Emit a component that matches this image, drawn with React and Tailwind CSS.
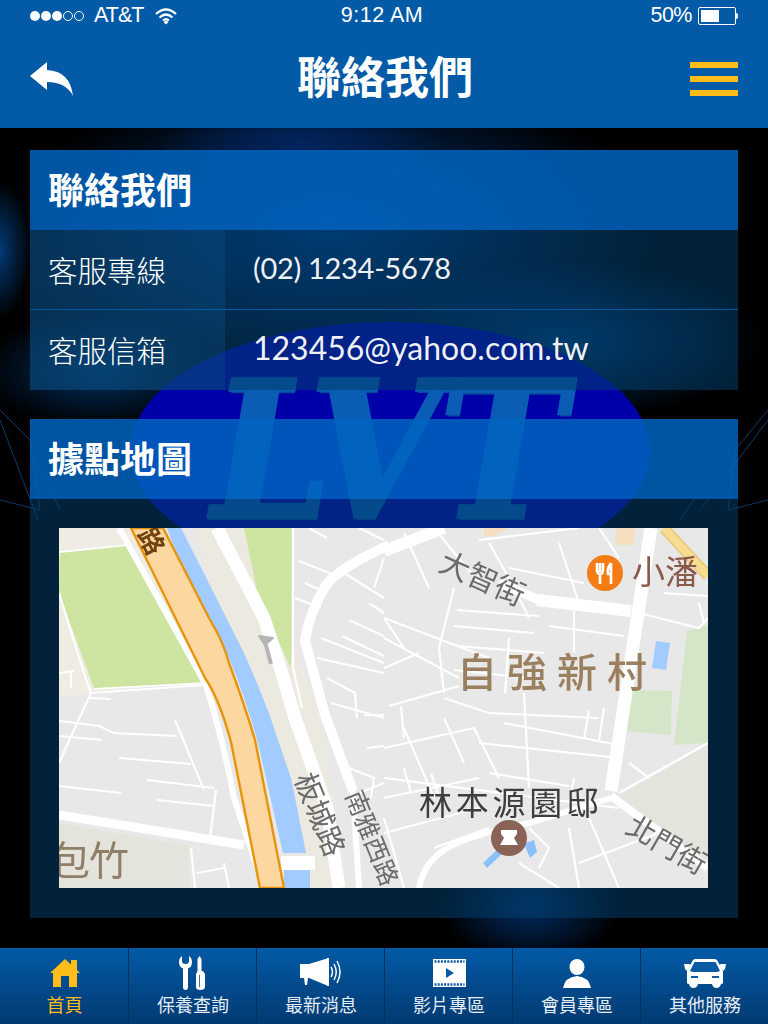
const thinRoads = [
  // left block
  'M0 65 L25 145 L32 165 L0 235', 'M32 165 L145 157', 'M30 170 L52 171', 'M0 193 L40 198 L55 205 L118 208',
  'M0 208 L43 212', 'M116 192 L145 262', 'M60 230 L132 236', 'M88 252 L155 260', 'M0 258 L62 265', 'M98 272 L155 278',
  'M157 262 L151 310', 'M132 320 L136 360', 'M138 345 L165 340', 'M165 335 L170 360', 'M0 145 L15 143', 'M12 143 L12 160',
  // between the roads
  'M234 0 L234 140 L243 180', 'M268 10 L250 0', 'M240 33 L278 48', 'M246 55 L268 65', 'M236 70 L262 80',
  'M290 92 L325 108', 'M283 108 L325 128', 'M262 110 L325 135', 'M258 130 L325 145', 'M268 150 L296 165 L298 190',
  'M272 175 L325 190', 'M305 187 L325 187', 'M308 220 L325 218', 'M290 240 L315 250 L312 270', 'M325 255 L300 265',
  'M300 0 L325 12', 'M315 60 L325 30', 'M285 45 L325 70', 'M310 75 L325 85',
  // right block
  'M325 90 L345 120', 'M325 90 L430 130', 'M325 110 L400 150', 'M325 140 L360 125', 'M395 60 L380 120 L385 165',
  'M398 82 L480 88', 'M395 98 L475 105', 'M398 118 L485 125', 'M395 142 L470 150', 'M450 110 L446 165', 'M490 98 L565 108',
  'M515 80 L515 125', 'M385 170 L430 185 L540 190', 'M330 178 L400 158', 'M465 165 L470 260', 'M445 195 L565 218',
  'M342 178 L345 210', 'M325 220 L415 200 L440 250', 'M385 190 L405 235', 'M345 200 L375 270', 'M420 215 L560 230',
  'M430 245 L510 258', 'M515 250 L510 275', 'M530 183 L525 210', 'M545 180 L540 212', 'M325 250 L560 280', 'M345 240 L352 265',
  'M372 245 L380 268', 'M325 270 L420 250', 'M325 290 L345 360', 'M325 305 L420 280', 'M375 320 L430 300',
  'M510 300 L520 360', 'M520 335 L600 305', 'M530 290 L560 360', 'M470 300 L490 320 L480 340', 'M460 335 L500 360',
  'M560 265 L649 215', 'M590 250 L570 235', 'M345 5 L370 60', 'M375 0 L420 55', 'M420 12 L520 0', 'M430 15 L450 50 L470 90',
  'M450 40 L525 55', 'M500 15 L520 75', 'M540 0 L560 30', 'M580 85 L640 100 L649 90', 'M640 75 L645 95', 'M605 65 L649 68',
];

function MapDrawing() {
  return (
    <svg viewBox="0 0 649 360" className="block h-[360px] w-[649px] blur-[0.5px]">
      <rect width="649" height="360" fill="#e8e8e8" />
      <path d="M0 0 H75 L150 150 L0 170 Z" fill="#efece4" />
      <path d="M135 0 H190 L262 190 L290 360 H250 Z" fill="#ece9e1" />
      <path d="M1 25 L70 18 L143 155 L35 160 L0 65 Z" fill="#cde5a1" />
      <path d="M185 0 H233 L232 140 L200 72 Z" fill="#cde5a1" />
      <path d="M0 295 L130 318 V360 H0 Z" fill="#e4e4dc" />
      <path d="M557 270 L649 217 V333 Z" fill="#e3e4dc" />
      <path d="M628 103 L649 97 V215 L615 217 Z" fill="#d5e6c8" />
      <path d="M568 162 L613 163 L612 207 L567 203 Z" fill="#d5e6c8" />
      <path d="M558 0 H577 L574 17 L556 17 Z" fill="#f5dfc0" />
      <path d="M425 0 H450 L435 8 L425 8 Z" fill="#f5dfc0" />

      {/* main roads */}
      <path d="M60 0 L147 157 Q165 215 175 270 L205 360" fill="none" stroke="#fff" strokeWidth="6" />
      <path d="M158 0 L205 90 Q222 140 236 190 L268 280 L280 360" fill="none" stroke="#fff" strokeWidth="13" />
      <path d="M330 17 Q280 40 267 57 Q250 85 246 113 L266 187 L294 263" fill="none" stroke="#fff" strokeWidth="10" />
      <path d="M294 263 L300 360" fill="none" stroke="#fff" strokeWidth="6" />
      <path d="M592 0 L552 263" fill="none" stroke="#fff" strokeWidth="13" />
      <path d="M552 268 L649 340" fill="none" stroke="#fff" strokeWidth="8" />
      <path d="M325 23 L385 0" fill="none" stroke="#fff" strokeWidth="12" />
      <path d="M478 72 L572 83" fill="none" stroke="#fff" strokeWidth="12" />
      <path d="M440 55 L480 72" fill="none" stroke="#fff" strokeWidth="9" />
      <path d="M0 287 L185 317" fill="none" stroke="#fff" strokeWidth="9" />
      <path d="M360 360 C368 320 400 310 470 295 L552 270" fill="none" stroke="#fff" strokeWidth="6" />
      {thinRoads.map((d) => (
        <path key={d} d={d} fill="none" stroke="#fff" strokeWidth="2.2" />
      ))}
      <path d="M0 24 L68 17 L145 155 L35 161" fill="none" stroke="#fff" strokeWidth="1.5" />

      {/* river and expressway */}
      <path d="M108 0 H122 L185 125 Q205 170 215 200 L232 250 L247 325 H224 L199 215 Q185 165 170 130 L120 33 Z" fill="#a2cbff" />
      <rect x="225" y="342" width="26" height="18" fill="#a2cbff" />
      <rect x="222" y="328" width="34" height="14" fill="#fff" />
      <path d="M72 0 H104 L150 90 Q165 115 170 135 Q185 175 196 212 L225 360 H201 L172 214 Q160 170 146 150 Z" fill="#fdd7a0" stroke="#e8930c" strokeWidth="2.4" />
      <path d="M205 110 L212 136" stroke="#b5b5b5" strokeWidth="4" />
      <path d="M200 108 L206 117 L214 110 Z" fill="#b5b5b5" stroke="#b5b5b5" strokeWidth="2" strokeLinejoin="round" />
      <path d="M597 113 L611 115 L607 142 L593 140 Z" fill="#a2cbff" />
      <path d="M605 0 L649 48" fill="none" stroke="#e9c77a" strokeWidth="11" />
      <path d="M605 0 L649 48" fill="none" stroke="#f8dc91" strokeWidth="8" />
      <path d="M424 335 L440 320 L443 326 L428 340 Z M465 316 L475 312 L478 324 L471 330 Z" fill="#8cc0fb" />

      {/* labels */}
      <g className="font-['Noto_Sans_CJK_TC',sans-serif]">
        <text x="78" y="6" fontSize="26" fontWeight="700" fill="#70420f" transform="rotate(62 78 6)">路</text>
        <text x="378" y="42" fontSize="30" fill="#6b6b6b" transform="rotate(24 378 42)">大智街</text>
        <text x="573" y="56" fontSize="33" fill="#8a5a4a">小潘</text>
        <text x="398" y="159" fontSize="40" fontWeight="500" fill="#9b8060" letterSpacing="10">自強新村</text>
        <text x="360" y="287" fontSize="33" fill="#3d3d3d" textLength="180">林本源園邸</text>
        <text x="565" y="304" fontSize="29" fill="#6b6b6b" transform="rotate(30 565 304)">北門街</text>
        <text x="235" y="250" fontSize="29" fill="#6b6b6b" transform="rotate(68 235 250)">板城路</text>
        <text x="286" y="267" fontSize="25" fill="#6b6b6b" transform="rotate(68 286 267)">南雅西路</text>
        <text x="-9" y="347" fontSize="40" fill="#8f7f68" letterSpacing="-1">包竹</text>
      </g>

      {/* restaurant pin */}
      <circle cx="546" cy="45" r="18" fill="#f57c14" />
      <path d="M538 35 V42 Q538 46 541 46 V56 M544 35 V42 Q544 46 541 46 M541 35 V44 M552 35 V56 M552 35 Q548 40 549 46 H552" fill="none" stroke="#fff" strokeWidth="2.6" />
      {/* landmark pin */}
      <circle cx="450" cy="310" r="18" fill="#8b6356" />
      <path d="M442 302 H458 V306 L455 310 L459 317 H441 L445 310 L442 306 Z" fill="#fff" />
    </svg>
  );
}

function SectionHead({ children }) {
  return (
    <h2 className="flex h-20 items-center bg-[rgba(0,100,190,0.85)] pl-[18px] pt-[3px] text-[36px] font-bold leading-none text-white">
      {children}
    </h2>
  );
}

function InfoRow({ label, value, valueClass, divider }) {
  return (
    <div className={divider ? 'flex h-20 border-b border-[#0458a0]' : 'flex h-20'}>
      <div className="flex w-[195px] items-center bg-[rgba(20,90,150,0.3)] pl-[18px] pt-1 text-[29.500px] font-light leading-none text-white">
        {label}
      </div>
      <div className={`flex flex-1 items-center pb-[5px] pl-7 font-['Lato',sans-serif] font-normal leading-none text-white/95 ${valueClass}`}>
        {value}
      </div>
    </div>
  );
}

function TabIcon({ name }) {
  if (name === 'home') {
    return (
      <svg viewBox="0 0 30 30" className="h-[30px] w-[30px]" fill="#ffbc1b">
        <path d="M15 1 L21 6.500 V2 H27 V12 L30 15 H27 V29 H19 V18 H11 V29 H3 V15 H0 Z" />
      </svg>
    );
  }
  if (name === 'tools') {
    return (
      <svg viewBox="0 0 28 34" className="h-[34px] w-[28px]" fill="#fff">
        <path d="M3 0 V5 Q3 8 6.500 8 Q10 8 10 5 V0 Q13 2 13 6 Q13 11 9 12.500 V31 Q9 34 6.500 34 Q4 34 4 31 V12.500 Q0 11 0 6 Q0 2 3 0 Z" />
        <path d="M20.500 0 L22.500 3 V15 H24 L26 18 V31 Q26 34 21 34 Q17 34 17 31 V18 L18.500 15 V3 Z" />
        <path d="M20 19 H20.800 V31 H20 Z" fill="#0b4f92" />
      </svg>
    );
  }
  if (name === 'speaker') {
    return (
      <svg viewBox="0 0 43 30" className="h-[30px] w-[43px]" fill="#fff">
        <path d="M0 6 H9 L27 0.500 V27.500 L9 20 H0 Z" />
        <path d="M27 0 H29 V28 H27 Z" />
        <path d="M4 20 H8 L7 27 H5 Z" />
        <path d="M31 9 Q34 14 31 19 M34 6 Q38.500 14 34 22 M37 3 Q43 14 37 25" fill="none" stroke="#fff" strokeWidth="1.500" />
      </svg>
    );
  }
  if (name === 'film') {
    return (
      <svg viewBox="0 0 33 28" className="h-[28px] w-[33px]">
        <rect width="33" height="28" fill="#fff" />
        <path d="M1.500 2.500 H31.500 M1.500 25.500 H31.500" stroke="#0b5aa4" strokeWidth="2.400" strokeDasharray="2 1.200" fill="none" />
        <path d="M13 9 L21 14 L13 19 Z" fill="#0b5aa4" />
      </svg>
    );
  }
  if (name === 'user') {
    return (
      <svg viewBox="0 0 28 29" className="h-[29px] w-[28px]" fill="#fff">
        <ellipse cx="14" cy="8" rx="7.500" ry="8" />
        <path d="M0 29 Q2 18 14 17 Q26 18 28 29 Z" />
      </svg>
    );
  }
  return (
    <svg viewBox="0 0 42 29" className="h-[29px] w-[42px]" fill="#fff">
      <path d="M0 5 H5 L7 6 L3 12 L1 10 Z M42 5 H37 L35 6 L39 12 L41 10 Z" />
      <path d="M3 12 L9 1 Q10 0 12 0 H30 Q32 0 33 1 L39 12 V24 Q39 25 37 25 Q36 29 32.500 29 Q29 29 28 25 H14 Q13 29 9.500 29 Q6 29 5 25 Q3 25 3 24 Z" />
      <path d="M6 12 L10.500 3 H31.500 L36 12 L33 13 H9 Z" fill="#0b5aa4" />
      <path d="M9.500 11 L12.500 5 H29.500 L32.500 11 Z" fill="#0b5aa4" />
      <path d="M7 18 H14 M28 18 H35" stroke="#0b5aa4" strokeWidth="1.800" />
    </svg>
  );
}

const tabs = [
  { icon: 'home', label: '首頁', active: true },
  { icon: 'tools', label: '保養查詢' },
  { icon: 'speaker', label: '最新消息' },
  { icon: 'film', label: '影片專區' },
  { icon: 'user', label: '會員專區' },
  { icon: 'car', label: '其他服務' },
];

export default function App() {
  return (
    <div className="relative flex h-[1024px] w-[768px] flex-col overflow-hidden bg-black font-['Liberation_Sans','Noto_Sans_CJK_TC',sans-serif]">
      {/* wallpaper */}
      <div className="absolute inset-0 bg-[radial-gradient(ellipse_140px_45px_at_300px_145px,#02245e,transparent),radial-gradient(ellipse_30px_70px_at_0px_250px,#023a75,transparent),radial-gradient(ellipse_330px_150px_at_330px_230px,#003a80,transparent),radial-gradient(ellipse_200px_80px_at_560px_340px,#00386f,transparent),radial-gradient(ellipse_90px_60px_at_530px_905px,#012e66,transparent),radial-gradient(ellipse_120px_60px_at_100px_370px,#003060,transparent)]" />
      <div className="absolute left-[130px] top-[322px] h-[258px] w-[520px] rounded-[50%] bg-[#0000a8]" />
      <svg viewBox="0 0 768 150" className="absolute left-0 top-[410px] h-[150px] w-[768px]" fill="none" stroke="#0c3b68" strokeWidth="1">
        <path d="M0 0 L30 30 L40 100 L0 90 M0 10 L38 110 M30 40 L60 100 M768 0 L735 40 L728 100 L768 90 M768 10 L700 100 M735 30 L680 110" />
      </svg>
      <div className="absolute left-[212px] top-[356px] origin-top scale-y-[1.110] font-['DejaVu_Serif',serif] text-[170px] font-bold italic leading-none tracking-[-2px] text-[#0a5cb4] [-webkit-text-stroke:3px_#0a5cb4] [text-shadow:1px_3px_0_#064a96]">
        LVT
      </div>

      <div className="relative flex flex-1 flex-col">
        {/* top bar */}
        <header className="h-32 bg-[#035aa6] text-white">
          <div className="flex h-[32px] items-center justify-between px-[30px] text-[21.500px] leading-none">
            <div className="flex w-[180px] items-center">
              <span className="flex gap-[1px]">
                <i className="h-[10px] w-[10px] rounded-full bg-white" />
                <i className="h-[10px] w-[10px] rounded-full bg-white" />
                <i className="h-[10px] w-[10px] rounded-full bg-white" />
                <i className="h-[10px] w-[10px] rounded-full border border-white" />
                <i className="h-[10px] w-[10px] rounded-full border border-white" />
              </span>
              <span className="ml-[10px] tracking-[-1px]">AT&amp;T</span>
              <svg viewBox="0 0 22 17" className="ml-3 h-[17px] w-[22px]" fill="none" stroke="#fff" strokeWidth="2.200">
                <path d="M1 6 Q11 -3 21 6 M4.500 9.500 Q11 3.500 17.500 9.500 M8 12.500 Q11 10 14 12.500" />
                <path d="M8.500 14 L11 16.500 L13.500 14 Q11 12 8.500 14 Z" fill="#fff" stroke="none" />
              </svg>
            </div>
            <span className="mr-1 tracking-[0.5px]">9:12 AM</span>
            <div className="flex w-[180px] items-center justify-end">
              <span className="tracking-[-0.5px]">50%</span>
              <div className="ml-[6px] flex h-[18px] w-[38px] items-center rounded-[2px] border border-white p-[2px]">
                <div className="h-full w-[18px] bg-white" />
              </div>
              <div className="h-[6px] w-[2px] rounded-r-sm bg-white" />
            </div>
          </div>
          <div className="flex h-[96px] items-center justify-between pb-[2px] pl-[30px] pr-[30px]">
            <svg viewBox="0 0 44 34" className="h-[34px] w-[44px]" fill="#fff">
              <path d="M0 14 L17 0 V8 Q40 9 43 34 Q36 20 17 20 V28 Z" />
            </svg>
            <h1 className="ml-[6px] text-[44px] font-bold leading-none">聯絡我們</h1>
            <div className="flex h-[34px] w-[48px] flex-col justify-between">
              <i className="h-[6px] bg-[#ffbc1b]" />
              <i className="h-[6px] bg-[#ffbc1b]" />
              <i className="h-[6px] bg-[#ffbc1b]" />
            </div>
          </div>
        </header>

        <main className="flex-1 px-[30px] pt-[22px]">
          <section className="mb-[29px]">
            <SectionHead>聯絡我們</SectionHead>
            <div className="bg-[rgba(2,62,105,0.55)]">
              <InfoRow label="客服專線" value="(02) 1234-5678" valueClass="text-[29px] tracking-[-0.3px]" divider />
              <InfoRow label="客服信箱" value="123456@yahoo.com.tw" valueClass="text-[32px]" />
            </div>
          </section>
          <section>
            <SectionHead>據點地圖</SectionHead>
            <div className="bg-[rgba(2,62,105,0.55)] px-[29px] py-[29px] pr-[30px] pb-[30px]">
              <MapDrawing />
            </div>
          </section>
        </main>

        {/* bottom tabs */}
        <nav className="grid h-[76px] grid-cols-6 bg-gradient-to-b from-[#035aa6] to-[#023a72]">
          {tabs.map((tab) => (
            <div
              key={tab.label}
              className="flex flex-col items-center border-l border-[#02335f] pl-px pt-[8px] first:border-l-0"
            >
              <div className="flex h-[34px] items-center justify-center">
                <TabIcon name={tab.icon} />
              </div>
              <span
                className={
                  tab.active
                    ? 'mt-[6px] text-[18px] leading-[20px] text-[#ffbc1b]'
                    : 'mt-[6px] text-[18px] leading-[20px] text-[#e6edf5]'
                }
              >
                {tab.label}
              </span>
            </div>
          ))}
        </nav>
      </div>
    </div>
  );
}
